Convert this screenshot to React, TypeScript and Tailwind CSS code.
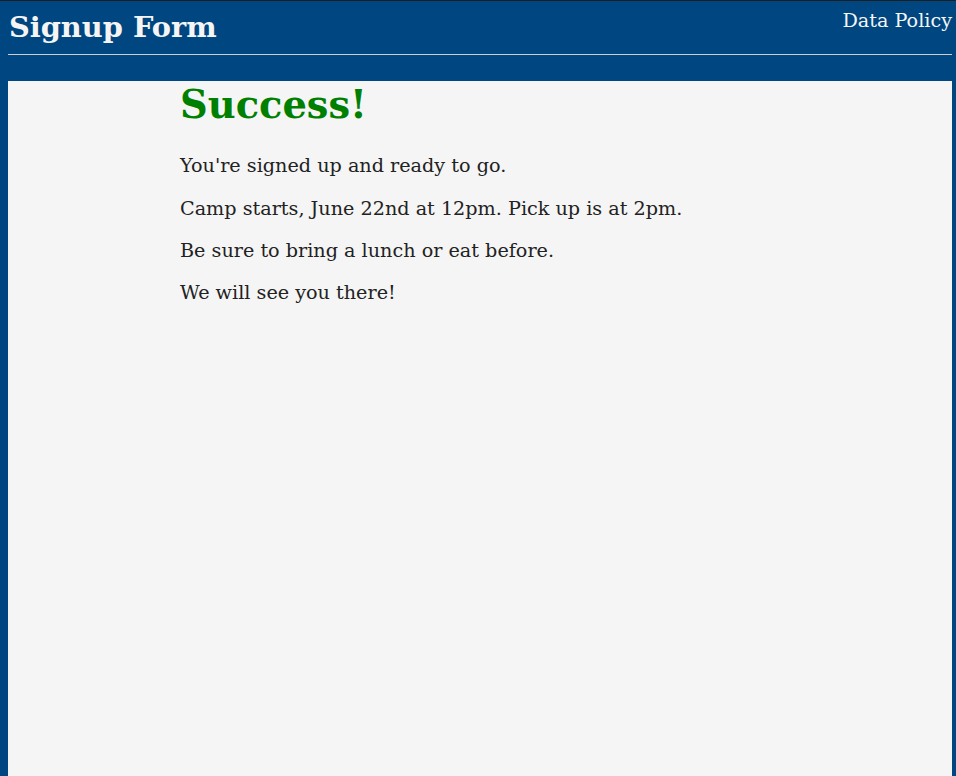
export default function App() {
  return (
    <div className="min-h-screen flex flex-col bg-[#004680] border-t border-[#1e1e1e] pl-2 pr-1 font-['DejaVu_Serif',serif]">
      <header className="flex justify-between items-start h-[53px]">
        <h1 className="text-[28.8px] font-bold leading-none text-[#f5f5f5] pt-[12px] pl-px">Signup Form</h1>
        <a className="text-[19.2px] leading-none text-[#f5f5f5] pt-[10px]">Data Policy</a>
      </header>
      <hr className="border-t border-[#cfcfcf]" />
      <div className="h-[26px]" />
      <main className="flex-1 bg-[#f5f5f5]">
        <div className="max-w-[600px] mx-auto text-[#222] text-[19.2px]">
          <h2 className="text-[38.4px] font-bold leading-none text-[#008000] pt-[5px]">Success!</h2>
          <p className="mt-[30px] leading-[23.1px]">You're signed up and ready to go.</p>
          <p className="mt-[19.2px] leading-[23.1px]">Camp starts, June 22nd at 12pm. Pick up is at 2pm.</p>
          <p className="mt-[19.2px] leading-[23.1px]">Be sure to bring a lunch or eat before.</p>
          <p className="mt-[19.2px] leading-[23.1px]">We will see you there!</p>
        </div>
      </main>
    </div>
  );
}
